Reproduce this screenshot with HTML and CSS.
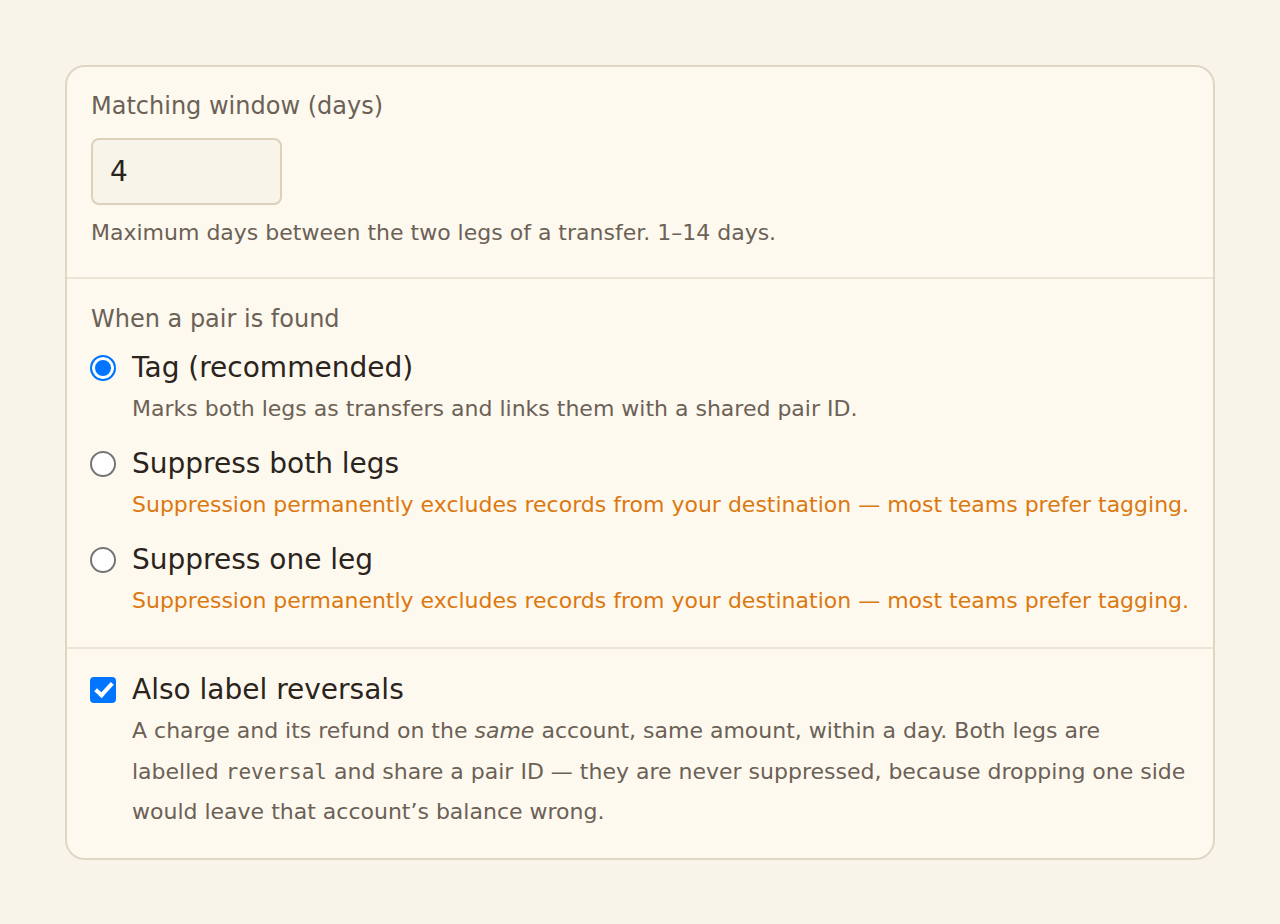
FILE: index.html
```html
<!DOCTYPE html>
<html lang="en">
<head>
<meta charset="utf-8">
<title>Transfer matching settings</title>
<link rel="stylesheet" href="styles.css">
</head>
<body>
<div class="card">
  <section class="section section-window">
    <label class="field-label" for="window">Matching window (days)</label>
    <input class="num-input" id="window" type="text" value="4">
    <p class="help">Maximum days between the two legs of a transfer. 1–14 days.</p>
  </section>
  <section class="section section-pair">
    <div class="field-label">When a pair is found</div>
    <div class="options">
      <label class="option">
        <input class="radio" type="radio" name="mode" checked>
        <span class="option-body">
          <span class="option-title">Tag (recommended)</span>
          <span class="option-desc">Marks both legs as transfers and links them with a shared pair ID.</span>
        </span>
      </label>
      <label class="option">
        <input class="radio" type="radio" name="mode">
        <span class="option-body">
          <span class="option-title">Suppress both legs</span>
          <span class="option-desc warn">Suppression permanently excludes records from your destination — most teams prefer tagging.</span>
        </span>
      </label>
      <label class="option">
        <input class="radio" type="radio" name="mode">
        <span class="option-body">
          <span class="option-title">Suppress one leg</span>
          <span class="option-desc warn">Suppression permanently excludes records from your destination — most teams prefer tagging.</span>
        </span>
      </label>
    </div>
  </section>
  <section class="section section-reversal">
    <label class="option">
      <input class="check" type="checkbox" checked>
      <span class="option-body tight">
        <span class="option-title">Also label reversals</span>
        <span class="option-desc long">A charge and its refund on the <em>same</em> account, same amount, within a day. Both legs are labelled <code>reversal</code> and share a pair ID — they are never suppressed, because dropping one side would leave that account’s balance wrong.</span>
      </span>
    </label>
  </section>
</div>
</body>
</html>
```

FILE: styles.css
```css
html, body {
  margin: 0;
  padding: 0;
}
body {
  background: #f9f4ea;
  font-family: "DejaVu Sans", sans-serif;
  color: #2a241d;
  padding: 65px 65px;
}
.card {
  background: #fef9ee;
  border: 2px solid #e0d6c4;
  border-radius: 20px;
  overflow: hidden;
}
.section {
  padding: 23px 20px 28px 24px;
  border-top: 2px solid #ece4d4;
}
.section:first-child {
  border-top: none;
}
.field-label {
  display: block;
  font-size: 24px;
  line-height: 33px;
  color: #6b6157;
}
.num-input {
  display: block;
  box-sizing: border-box;
  margin-top: 15px;
  width: 191px;
  height: 67px;
  padding: 0 17px;
  font-family: "DejaVu Sans", sans-serif;
  font-size: 28px;
  color: #2a241d;
  background: #f8f4ea;
  border: 2px solid #ddd1bc;
  border-radius: 8px;
  outline: none;
}
.help {
  margin: 11px 0 0 0;
  font-size: 22px;
  line-height: 33px;
  color: #6b6157;
}
.section-pair {
  padding-top: 24px;
  padding-bottom: 30px;
}
.options {
  display: flex;
  flex-direction: column;
  gap: 18px;
  margin-top: 11px;
}
.option {
  display: flex;
  align-items: flex-start;
  gap: 16px;
  cursor: pointer;
}
.radio,
.check {
  -webkit-appearance: none;
  appearance: none;
  flex: none;
  box-sizing: border-box;
  width: 26px;
  height: 26px;
  margin: 8px 0 0 -1px;
  position: relative;
}
.radio {
  border: 2.5px solid #767676;
  border-radius: 50%;
  background: #ffffff;
}
.radio:checked {
  border-color: #0075ff;
  background: #0075ff;
  box-shadow: inset 0 0 0 3px #ffffff;
}
.check {
  border-radius: 4px;
  background: #0075ff;
  border: none;
}
.check::after {
  content: "";
  position: absolute;
  left: 8.5px;
  top: 2px;
  width: 7px;
  height: 15px;
  border-right: 4px solid #ffffff;
  border-bottom: 4px solid #ffffff;
  transform: rotate(42deg);
  box-sizing: border-box;
  width: 10px;
  height: 18px;
}
.option-body {
  display: flex;
  flex-direction: column;
  gap: 3px;
}
.option-body.tight {
  gap: 0;
}
.option-title {
  font-size: 28px;
  line-height: 42px;
  color: #2a241d;
}
.option-desc {
  font-size: 22px;
  line-height: 33px;
  color: #6b6157;
}
.option-desc.warn {
  color: #dc7810;
  white-space: nowrap;
}
.section-reversal {
  padding-top: 20px;
  padding-bottom: 25px;
}
.option-desc.long {
  line-height: 40.5px;
  padding-right: 4px;
}
code {
  font-family: "DejaVu Sans Mono", monospace;
  font-size: 21px;
}
```
